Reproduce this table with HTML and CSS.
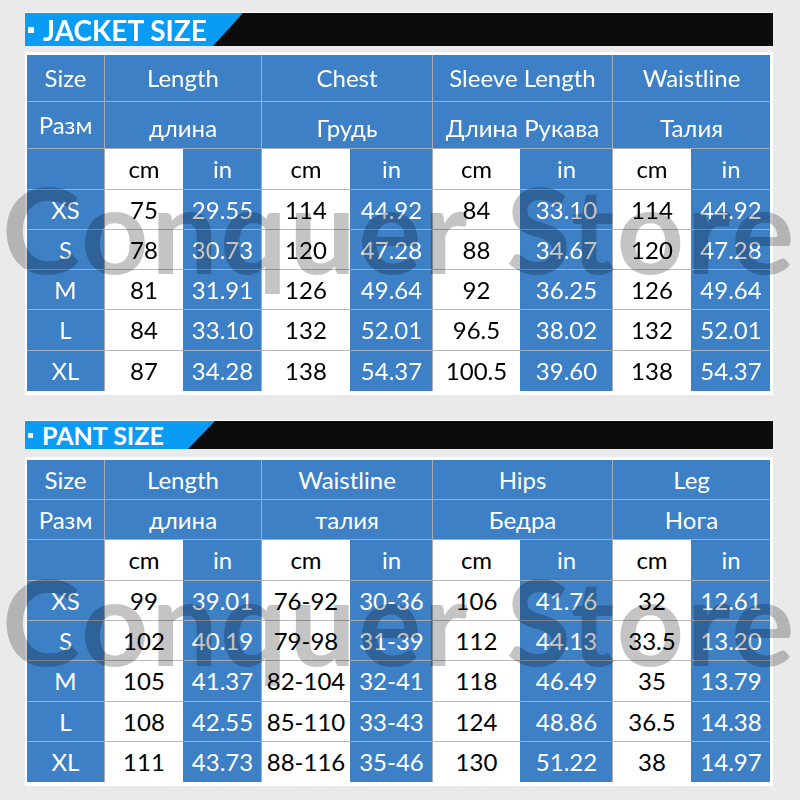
FILE: index.html
```html
<!DOCTYPE html>
<html>
<head>
<meta charset="utf-8">
<link rel="stylesheet" href="styles.css">
</head>
<body>
<div class="page">
  <section class="section jacket">
    <div class="bar"><div class="bar-blue"><span class="bullet"></span><span class="title">JACKET SIZE</span></div></div>
    <div class="frame">
      <div class="grid">
        <div class="c b">Size</div><div class="c b s2">Length</div><div class="c b s2">Chest</div><div class="c b s2">Sleeve Length</div><div class="c b s2 last">Waistline</div>
        <div class="c b">Разм</div><div class="c b s2 low">длина</div><div class="c b s2 low">Грудь</div><div class="c b s2 low">Длина Рукава</div><div class="c b s2 last low">Талия</div>
        <div class="c b"></div><div class="c w">cm</div><div class="c b">in</div><div class="c w">cm</div><div class="c b">in</div><div class="c w">cm</div><div class="c b">in</div><div class="c w">cm</div><div class="c b last">in</div>
        <div class="c b">XS</div><div class="c w">75</div><div class="c b">29.55</div><div class="c w">114</div><div class="c b">44.92</div><div class="c w">84</div><div class="c b">33.10</div><div class="c w">114</div><div class="c b last">44.92</div>
        <div class="c b">S</div><div class="c w">78</div><div class="c b">30.73</div><div class="c w">120</div><div class="c b">47.28</div><div class="c w">88</div><div class="c b">34.67</div><div class="c w">120</div><div class="c b last">47.28</div>
        <div class="c b">M</div><div class="c w">81</div><div class="c b">31.91</div><div class="c w">126</div><div class="c b">49.64</div><div class="c w">92</div><div class="c b">36.25</div><div class="c w">126</div><div class="c b last">49.64</div>
        <div class="c b">L</div><div class="c w">84</div><div class="c b">33.10</div><div class="c w">132</div><div class="c b">52.01</div><div class="c w">96.5</div><div class="c b">38.02</div><div class="c w">132</div><div class="c b last">52.01</div>
        <div class="c b end">XL</div><div class="c w end">87</div><div class="c b end">34.28</div><div class="c w end">138</div><div class="c b end">54.37</div><div class="c w end">100.5</div><div class="c b end">39.60</div><div class="c w end">138</div><div class="c b last end">54.37</div>
      </div>
    </div>
    <div class="watermark">Conquer Store</div>
  </section>

  <section class="section pant">
    <div class="bar"><div class="bar-blue"><span class="bullet"></span><span class="title">PANT SIZE</span></div></div>
    <div class="frame">
      <div class="grid">
        <div class="c b">Size</div><div class="c b s2">Length</div><div class="c b s2">Waistline</div><div class="c b s2">Hips</div><div class="c b s2 last">Leg</div>
        <div class="c b">Разм</div><div class="c b s2">длина</div><div class="c b s2">талия</div><div class="c b s2">Бедра</div><div class="c b s2 last">Нога</div>
        <div class="c b"></div><div class="c w">cm</div><div class="c b">in</div><div class="c w">cm</div><div class="c b">in</div><div class="c w">cm</div><div class="c b">in</div><div class="c w">cm</div><div class="c b last">in</div>
        <div class="c b">XS</div><div class="c w">99</div><div class="c b">39.01</div><div class="c w">76-92</div><div class="c b">30-36</div><div class="c w">106</div><div class="c b">41.76</div><div class="c w">32</div><div class="c b last">12.61</div>
        <div class="c b">S</div><div class="c w">102</div><div class="c b">40.19</div><div class="c w">79-98</div><div class="c b">31-39</div><div class="c w">112</div><div class="c b">44.13</div><div class="c w">33.5</div><div class="c b last">13.20</div>
        <div class="c b">M</div><div class="c w">105</div><div class="c b">41.37</div><div class="c w">82-104</div><div class="c b">32-41</div><div class="c w">118</div><div class="c b">46.49</div><div class="c w">35</div><div class="c b last">13.79</div>
        <div class="c b">L</div><div class="c w">108</div><div class="c b">42.55</div><div class="c w">85-110</div><div class="c b">33-43</div><div class="c w">124</div><div class="c b">48.86</div><div class="c w">36.5</div><div class="c b last">14.38</div>
        <div class="c b end">XL</div><div class="c w end">111</div><div class="c b end">43.73</div><div class="c w end">88-116</div><div class="c b end">35-46</div><div class="c w end">130</div><div class="c b end">51.22</div><div class="c w end">38</div><div class="c b last end">14.97</div>
      </div>
    </div>
    <div class="watermark">Conquer Store</div>
  </section>
</div>
</body>
</html>
```

FILE: styles.css
```css
* { box-sizing: border-box; }
html, body {
  margin: 0;
  padding: 0;
  background: #eaeaea;
  width: 800px;
  height: 800px;
  overflow: hidden;
}
.page {
  padding-top: 12px;
  font-family: Lato, "Open Sans", sans-serif;
}
.section {
  position: relative;
  margin-left: 25px;
  width: 748px;
}
.pant { margin-top: 25px; }

.bar {
  display: flex;
  height: 34px;
  border-top: 1px solid #ffffff;
  background: #0c0c0c;
}
.pant .bar { height: 29px; }

.bar-blue {
  display: flex;
  align-items: center;
  width: 218px;
  height: 100%;
  background: #0a9cf4;
  clip-path: polygon(0 0, 100% 0, calc(100% - 30px) 100%, 0 100%);
  padding-left: 3px;
}
.pant .bar-blue {
  width: 190px;
  clip-path: polygon(0 0, 100% 0, calc(100% - 27px) 100%, 0 100%);
}
.bullet {
  width: 6px;
  height: 6px;
  background: #ffffff;
  margin-right: 9px;
  flex: none;
}
.pant .bullet { width: 5px; height: 5px; margin-right: 9px; }
.title {
  color: #ffffff;
  font-weight: 700;
  font-size: 28px;
  line-height: 1;
  white-space: nowrap;
}
.pant .title { font-size: 25px; }

.frame {
  margin-top: 6px;
  background: #ffffff;
  padding: 3px 3px 4px 2px;
}
.pant .frame { margin-top: 8px; }

.grid {
  display: grid;
  grid-template-columns: 78px 79px 78px 89px 82px 88px 92px 79px 78px;
}
.jacket .grid { grid-template-rows: 47px 47px 41px 40px 40px 40px 41px 40px; }
.pant .grid { grid-template-rows: 40px 40px 41px 40px 40px 41px 40px 40px; }

.c {
  display: flex;
  align-items: center;
  justify-content: center;
  font-size: 24px;
  line-height: 1;
  white-space: nowrap;
  border-right: 1px solid #a4acb6;
  border-bottom: 1px solid #a4acb6;
}
.c.last { border-right: none; }
.c.end { border-bottom: none; }
.s2 { grid-column: span 2; }
.b { background: #3d80c6; color: #ffffff; }
.w { background: #ffffff; color: #000000; border-right-color: #3d80c6; border-bottom-color: #b8b8b8; }
.low { padding-top: 6px; }

.watermark {
  position: absolute;
  left: -23px;
  top: 158px;
  font-family: Lato, sans-serif;
  font-weight: 700;
  font-size: 118px;
  line-height: 1;
  color: #c4c4c4;
  mix-blend-mode: multiply;
  white-space: nowrap;
  letter-spacing: 2.3px;
  word-spacing: 8px;
  pointer-events: none;
}
.pant .watermark { top: 142px; }
```
